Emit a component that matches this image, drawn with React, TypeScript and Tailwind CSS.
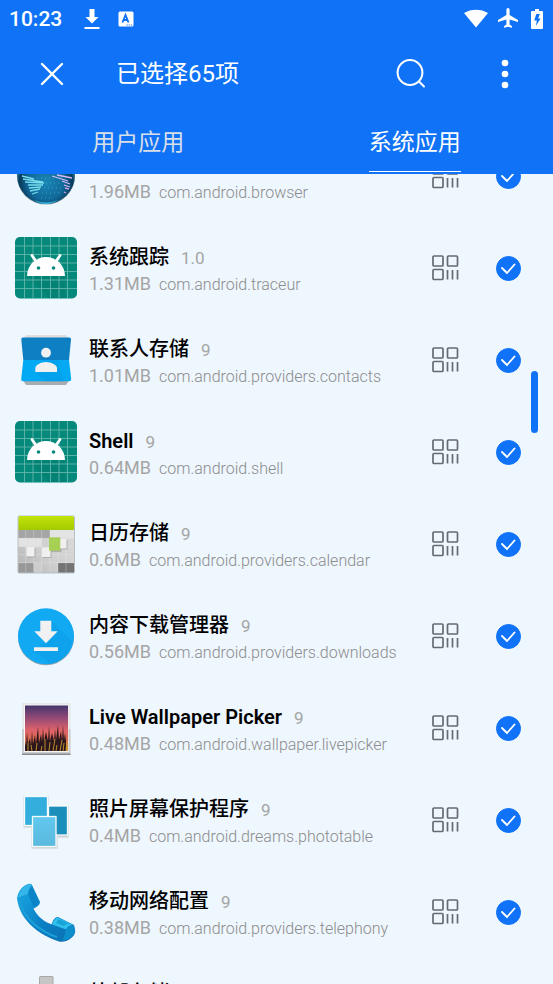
import { useState, type ReactNode } from "react";
import { clsx } from "clsx";

function GlobeIcon() {
  return (
    <svg viewBox="0 0 62 62" className="size-full" aria-hidden="true">
      <defs>
        <radialGradient id="globe" cx="0.5" cy="0.62" r="0.52">
          <stop offset="0" stopColor="#1a86b4" />
          <stop offset="0.6" stopColor="#11699a" />
          <stop offset="0.88" stopColor="#083a5a" />
          <stop offset="1" stopColor="#2b7fa8" />
        </radialGradient>
      </defs>
      <ellipse cx="31" cy="31" rx="29" ry="28.6" fill="#9ba5ad" />
      <circle cx="31" cy="30" r="29" fill="url(#globe)" />
      <path d="M19 55q12 5 24 0-12 8-24 0Z" fill="#38b9dd" />
      <g fill="none" stroke="#79dcea" strokeWidth="1.3">
        <path d="M7 31l12 3M8 34l20 3M10 37l19 1M13 40l15 0M14 43l12-1M15 46l10-2M17 49l6-2" />
        <path d="M37 31l16 5M42 30l15 3M47 36l8 3M49 40l6 2" stroke="#d5b9f2" />
        <path d="M50 43l4 1M49 47l2 1" stroke="#c9a3e8" />
      </g>
      <path d="M22 33h26M31 38h14M29 43h19M27 48h17M26 53h12" stroke="#3eacd0" strokeWidth="0.8" strokeDasharray="1 3" />
    </svg>
  );
}

function AndroidIcon() {
  return (
    <svg viewBox="0 0 62 62" className="size-full" aria-hidden="true">
      <rect width="62" height="61.5" rx="5" fill="#05897a" />
      <path d="M13 39l21 22h16V39Z" fill="#047b6d" opacity="0.55" />
      <path
        d="M9.5 0v61M18 0v61M26.5 0v61M35.5 0v61M44 0v61M52.5 0v61M0 9h62M0 17.5h62M0 26h62M0 34.5h62M0 43h62M0 51.5h62"
        stroke="#62b5ab"
        strokeWidth="0.9"
      />
      <path d="M12 39a19 19 0 0 1 38 0Z" fill="#fff" />
      <path d="M17 18.5l4.500 6.500M45 18.500l-4.500 6.500" stroke="#fff" strokeWidth="2.800" strokeLinecap="round" />
      <circle cx="23.5" cy="31" r="1.8" fill="#05897a" />
      <circle cx="38.5" cy="31" r="1.8" fill="#05897a" />
    </svg>
  );
}

function ContactsIcon() {
  return (
    <svg viewBox="0 0 62 62" className="size-full" aria-hidden="true">
      <path d="M11 6h40l3 4H8Z" fill="#dedede" />
      <path d="M7 50h48l-4 6H11Z" fill="#a9adaf" />
      <path d="M8 8.500h46.500q1.700 0 1.500 2l-2 20.500H8.300l-2-20.500q-.2-2 1.700-2Z" fill="#0f7fc4" />
      <path d="M8.300 31H54l2.200 19q.2 2.200-2 2.200H8.200q-2.200 0-2-2.200Z" fill="#04a9f4" />
      <path d="M20 42.500l10 9.700h19L42.500 31H31Z" fill="#039be5" opacity="0.5" />
      <circle cx="31" cy="23.700" r="4.900" fill="#f1f1f1" />
      <path d="M20.300 43v-4c0-3 6-6 10.800-6S42 36 42 39v4Z" fill="#f1f1f1" />
    </svg>
  );
}

function CalendarIcon() {
  return (
    <svg viewBox="0 0 62 62" className="size-full" aria-hidden="true">
      <defs>
        <linearGradient id="calTop" x2="0" y2="1">
          <stop offset="0" stopColor="#c3e40a" />
          <stop offset="1" stopColor="#a3c900" />
        </linearGradient>
        <linearGradient id="calBody" x1="1" x2="0" y2="1">
          <stop offset="0" stopColor="#dcdcdc" />
          <stop offset="0.6" stopColor="#cfcfcf" />
          <stop offset="1" stopColor="#b2b2b2" />
        </linearGradient>
      </defs>
      <rect x="2.500" y="2.500" width="57.500" height="58" rx="2" fill="#b9bfc4" />
      <rect x="3.500" y="3" width="55.500" height="56.500" rx="1.500" fill="url(#calBody)" />
      <path d="M3.500 17h31.500v8.300H3.500Z" fill="#a5a5a5" />
      <path d="M3.500 25.300h23.200v8.300H3.500Z" fill="#e2e2e2" />
      <path d="M35 17h24v8.300H35Z" fill="#e3e3e3" />
      <path d="M3.500 50H19v9.500H3.500Z" fill="#989898" />
      <path d="M18.700 50H27v9.500h-8.300Z" fill="#cccccc" />
      <path d="M43 50h16v9.500H43Z" fill="#747474" />
      <path
        d="M10.700 17v42M18.700 17v42M26.700 17v42M35 17v42M43 17v42M51 17v42M3.500 25.300H59M3.500 33.700H59M3.500 41.700H59M3.500 49.700H59"
        stroke="#ededed"
        strokeOpacity="0.45"
        strokeWidth="0.700"
      />
      <path d="M3.500 17V5q0-2 2-2H57q2 0 2 2v12Z" fill="url(#calTop)" />
      <path d="M12 35.500h8.500v9H12ZM28 36h8.500v9H28ZM35 26h11.500v13H35ZM46 27h6.500v9.500H46Z" fill="#777" opacity="0.400" />
      <path d="M11.500 34h8v9.500h-8ZM27 34.500h8.500V44H27ZM45 26h6.500v9.500H45Z" fill="#f0f0f0" />
      <path d="M34 24.300h11.300v13.400H34Z" fill="#a6d155" />
    </svg>
  );
}

function DownloadsIcon() {
  return (
    <svg viewBox="0 0 62 62" className="size-full" aria-hidden="true">
      <circle cx="31" cy="32.300" r="28" fill="#8fa3b0" />
      <circle cx="31" cy="31.300" r="28" fill="#12a9f3" />
      <path d="M36.300 15.700L57 36q-3 19-22 23L19 46l12-8Z" fill="#0b9ee8" opacity="0.600" />
      <path d="M25.300 15.700h11v10.600h6.400L31 38.300l-11.700-12h6ZM19 42.200h24V46H19Z" fill="#f1f1f1" />
    </svg>
  );
}

function WallpaperIcon() {
  return (
    <svg viewBox="0 0 62 62" className="size-full" aria-hidden="true">
      <defs>
        <linearGradient id="sunset" x2="0" y2="1">
          <stop offset="0" stopColor="#43356a" />
          <stop offset="0.250" stopColor="#8d4877" />
          <stop offset="0.550" stopColor="#e0636a" />
          <stop offset="0.780" stopColor="#d86a4c" />
          <stop offset="1" stopColor="#c99a2a" />
        </linearGradient>
      </defs>
      <rect x="7" y="6" width="48.500" height="52" fill="#e6e7e9" />
      <path d="M7 32h48.500v26H7Z" fill="#cbccce" />
      <path d="M7 56.500h48.500V58H7Z" fill="#8c8d90" />
      <rect x="9" y="7.500" width="44.500" height="47.500" fill="#f6f4f4" />
      <rect x="10" y="8.500" width="43" height="45.500" fill="url(#sunset)" />
      <path
        d="M10 54V44l1 5 1-14 1 12 2-6 1 8 1-15 1 13 2-9 1 9 2-17 1 16 2-9 1 8 1-14 1 13 2-9 2 9 1-15 1 15 2-8 2 8 1-12 1 11 2-15 1 15 2-9 1 10 1-16 1 15 1-7 1 8v10Z"
        fill="#2a161c"
      />
      <path
        d="M13 54V46M17 54l-1-6M21 54l1-8M26 54l1-5M30 54V42M34 54l1-9M38 54l2-12M41 54l1-6M45 54l2-11M48 54l1-8M51 54l1-10"
        stroke="#c99b2e"
        strokeWidth="0.900"
      />
    </svg>
  );
}

function PhotosIcon() {
  return (
    <svg viewBox="0 0 62 62" className="size-full" aria-hidden="true">
      <defs>
        <linearGradient id="photoFront" x2="0" y2="1">
          <stop offset="0" stopColor="#62c8ef" />
          <stop offset="1" stopColor="#5ab9dd" />
        </linearGradient>
      </defs>
      <g stroke="#f7fafb" strokeWidth="1.300">
        <path d="M9 8h24v30H9ZM33 18h20v30H33ZM17 29h25v30H17Z" fill="#b4bec4" stroke="#d3dade" />
        <rect x="33.500" y="17" width="19" height="29" fill="#1b8fba" />
        <rect x="9.500" y="7.500" width="23" height="29" fill="#34afdd" />
        <rect x="17.500" y="27.500" width="23.500" height="30" fill="url(#photoFront)" />
      </g>
    </svg>
  );
}

function PhoneIcon() {
  return (
    <svg viewBox="0 0 62 62" className="size-full" aria-hidden="true">
      <defs>
        <linearGradient id="phone" x1="0" x2="1" y1="0.200" y2="1">
          <stop offset="0" stopColor="#18a3df" />
          <stop offset="0.500" stopColor="#0a7fc4" />
          <stop offset="1" stopColor="#0a6fae" />
        </linearGradient>
      </defs>
      <path
        d="M14.300 2.700C8 4 3 10 2 17.300C3 25 6 33 12 40C19 49 31 56 44 60.500C51 62 59 57 60.300 50.700L59 44L43 36C40 36 38 39 36.700 43.300C29 41 22 35 18.500 27.500C22 26 25 24 25 21L17 4Q16 2.500 14.300 2.700Z"
        fill="url(#phone)"
      />
      <path d="M14.300 3Q5 6 3 17l10-4q1-7 4-9Q16 2.700 14.300 3Z" fill="#35b6e8" />
      <path d="M17 5l7.500 16q-1 3-6 5.500L13 13Q14 8 17 5Z" fill="#0a84c6" />
      <path d="M3 17l10-4 5 13Q15 20 10 17Z" fill="#129bd8" />
      <path d="M4 19Q7 32 18 42T42 56" fill="none" stroke="#1d9fd9" strokeWidth="2" />
      <path d="M43 36.500l16 8q-5-1-8 4l-14-5q2-6 6-7Z" fill="#2fc0ec" />
      <path d="M44 38l10 5q-4 0-5 2l-8-3Z" fill="#19a2d6" />
      <path d="M51 48.500q3-5 8-4l1 6q-3 8-12 9Z" fill="#0d8fcc" />
    </svg>
  );
}

function StorageIcon() {
  return (
    <svg viewBox="0 0 62 62" className="size-full" aria-hidden="true">
      <rect x="24" y="3" width="14.500" height="20" rx="1.500" fill="#a8a8a8" />
      <rect x="25" y="4" width="12.500" height="19" rx="1" fill="#c6c6c6" />
      <rect x="16" y="22" width="30" height="37" rx="3" fill="#9a9a9a" />
    </svg>
  );
}

function QrIcon() {
  return (
    <svg viewBox="0 0 27 27" className="size-[27px]" fill="none" stroke="#666b72" strokeWidth="1.700" aria-hidden="true">
      <rect x="1" y="1" width="10" height="10" rx="1" />
      <rect x="15.500" y="1" width="10" height="10" rx="1" />
      <rect x="1" y="14.500" width="10" height="10" rx="1" />
      <path d="M15.500 15v9.500M20.500 15v9.500M25.500 15v9.500" />
    </svg>
  );
}

type AppItem = { name: string; version: string; size: string; pkg: string; icon: ReactNode };

const apps: AppItem[] = [
  { name: "浏览器", version: "9", size: "1.96MB", pkg: "com.android.browser", icon: <GlobeIcon /> },
  { name: "系统跟踪", version: "1.0", size: "1.31MB", pkg: "com.android.traceur", icon: <AndroidIcon /> },
  { name: "联系人存储", version: "9", size: "1.01MB", pkg: "com.android.providers.contacts", icon: <ContactsIcon /> },
  { name: "Shell", version: "9", size: "0.64MB", pkg: "com.android.shell", icon: <AndroidIcon /> },
  { name: "日历存储", version: "9", size: "0.6MB", pkg: "com.android.providers.calendar", icon: <CalendarIcon /> },
  { name: "内容下载管理器", version: "9", size: "0.56MB", pkg: "com.android.providers.downloads", icon: <DownloadsIcon /> },
  { name: "Live Wallpaper Picker", version: "9", size: "0.48MB", pkg: "com.android.wallpaper.livepicker", icon: <WallpaperIcon /> },
  { name: "照片屏幕保护程序", version: "9", size: "0.4MB", pkg: "com.android.dreams.phototable", icon: <PhotosIcon /> },
  { name: "移动网络配置", version: "9", size: "0.38MB", pkg: "com.android.providers.telephony", icon: <PhoneIcon /> },
  { name: "外部存储", version: "9", size: "0.37MB", pkg: "com.android.externalstorage", icon: <StorageIcon /> },
];

function AppRow({ app }: { app: AppItem }) {
  const [checked, setChecked] = useState(true);
  const id = "select-" + app.pkg;
  const isLatin = /^[A-Za-z]/.test(app.name);
  return (
    <li className="flex h-[92px] shrink-0 items-center pr-8 pl-[15px]">
      <div className="size-[62px] shrink-0">{app.icon}</div>
      <label htmlFor={id} className="ml-3 min-w-0 flex-1 pt-1.5 whitespace-nowrap">
        <span className="flex items-baseline gap-3 leading-[26px]">
          <span className={clsx("text-[20px] text-black", isLatin ? "font-semibold" : "font-medium")}>{app.name}</span>
          <span className="text-[17px] text-[#a5a5a5]">{app.version}</span>
        </span>
        <span className="flex items-baseline gap-2 leading-[26px]">
          <span className="text-[18px] text-[#a5a5a5]">{app.size}</span>
          <span className="text-[16px] font-light text-[#8c8c8c]">{app.pkg}</span>
        </span>
      </label>
      <button type="button" aria-label="二维码" className="mr-[37px] shrink-0">
        <QrIcon />
      </button>
      <span className="relative size-[25px] shrink-0">
        <input
          id={id}
          type="checkbox"
          checked={checked}
          onChange={(e) => setChecked(e.target.checked)}
          className="peer block size-full appearance-none rounded-full border border-[#1073f7] checked:bg-[#1073f7]"
        />
        <svg
          viewBox="0 0 25 25"
          className="pointer-events-none invisible absolute inset-0 peer-checked:visible"
          fill="none"
          stroke="#fff"
          strokeWidth="1.800"
          strokeLinecap="round"
          strokeLinejoin="round"
          aria-hidden="true"
        >
          <path d="M6 12l5 5 7.500-8.500" />
        </svg>
      </span>
    </li>
  );
}

function StatusBar() {
  return (
    <div className="flex h-[37px] items-center px-[9px]">
      <span className="pt-px text-[21px] leading-7 font-medium">10:23</span>
      <svg viewBox="0 0 16 22" className="ml-[22px] h-[22px] w-4" fill="currentColor" aria-hidden="true">
        <path d="M5.500 1h5v8h4L8 15.500 1.500 9h4ZM.5 19h15v2H.5Z" />
      </svg>
      <svg viewBox="0 0 16 16" className="ml-[18px] size-4" aria-hidden="true">
        <rect x="0.500" y="0.500" width="15" height="15" rx="1.500" fill="#fff" />
        <path d="M4.500 11.500 7.500 4l3 7.500M5.500 9h4" fill="none" stroke="#1073f7" strokeWidth="1.900" />
        <path d="M8.500 14h1.200M10.700 14h1.200M12.900 14h1.200" stroke="#1073f7" strokeWidth="1" />
      </svg>
      <svg viewBox="0 0 24 20" className="ml-auto h-5 w-6" fill="currentColor" aria-hidden="true">
        <path d="M0 4C7-.5 17-.5 24 4L12 18.500Z" />
      </svg>
      <svg viewBox="0 0 20 21" className="ml-[10px] h-[21px] w-5" fill="currentColor" aria-hidden="true">
        <path d="M20 14v-2L11.600 6.900V1.700a1.600 1.600 0 0 0-3.200 0v5.200L0 12v2l8.400-2.500v5L6 18.200v1.500l4-1 4 1v-1.500L11.600 16.500v-5Z" />
      </svg>
      <svg viewBox="0 0 12 20" className="mr-px ml-[13px] h-5 w-3" aria-hidden="true">
        <path d="M4 0h4v2h3q1 0 1 1v16q0 1-1 1H1q-1 0-1-1V3q0-1 1-1h3Z" fill="#fff" />
        <path d="M5.300 5h3.500L7.200 9.500h2.300L5 17l.8-5.500H3.200Z" fill="#1073f7" />
      </svg>
    </div>
  );
}

export default function App() {
  const [tab, setTab] = useState("system");
  const tabs = [
    { key: "user", label: "用户应用" },
    { key: "system", label: "系统应用" },
  ];
  return (
    <div className="flex h-screen flex-col overflow-hidden bg-[#eef6fe] font-[Roboto,'Noto_Sans_CJK_SC',sans-serif]">
      <header className="shrink-0 bg-[#1073f7] text-white">
        <StatusBar />
        <div className="flex h-[74px] items-center pr-[33px] pl-10">
          <button type="button" aria-label="关闭" className="size-6">
            <svg viewBox="0 0 24 24" className="size-6" stroke="currentColor" strokeWidth="2.400" strokeLinecap="round" aria-hidden="true">
              <path d="M2 2l20 20M22 2 2 22" />
            </svg>
          </button>
          <h1 className="ml-[52px] flex-1 text-[24px] leading-8">已选择65项</h1>
          <button type="button" aria-label="搜索" className="size-[30px]">
            <svg viewBox="0 0 30 30" className="size-[30px]" fill="none" stroke="currentColor" strokeWidth="2" strokeLinecap="round" aria-hidden="true">
              <circle cx="14" cy="13.500" r="12.400" />
              <path d="M23 22.500l5 5" />
            </svg>
          </button>
          <button type="button" aria-label="更多" className="ml-16 h-[30px] w-[30px]">
            <svg viewBox="0 0 30 30" className="size-[30px]" fill="currentColor" aria-hidden="true">
              <circle cx="15" cy="4" r="3.300" />
              <circle cx="15" cy="15" r="3.300" />
              <circle cx="15" cy="26" r="3.300" />
            </svg>
          </button>
        </div>
        <div role="tablist" className="flex h-[63px] pb-0.5">
          {tabs.map((t) => (
            <div key={t.key} className="flex flex-1 justify-center">
              <button
                type="button"
                role="tab"
                aria-selected={tab === t.key}
                onClick={() => setTab(t.key)}
                className="border-b border-transparent pt-1 text-[23px] text-[#d9dfe8] aria-selected:border-white aria-selected:text-white"
              >
                {t.label}
              </button>
            </div>
          ))}
        </div>
      </header>
      <main className="relative min-h-0 flex-1 overflow-hidden">
        <ul className="-mt-11 flex flex-col">
          {apps.map((app) => (
            <AppRow key={app.pkg} app={app} />
          ))}
        </ul>
        <div className="absolute top-[197px] right-[15px] h-[62px] w-[7px] rounded-full bg-[#1073f7]" />
      </main>
    </div>
  );
}
